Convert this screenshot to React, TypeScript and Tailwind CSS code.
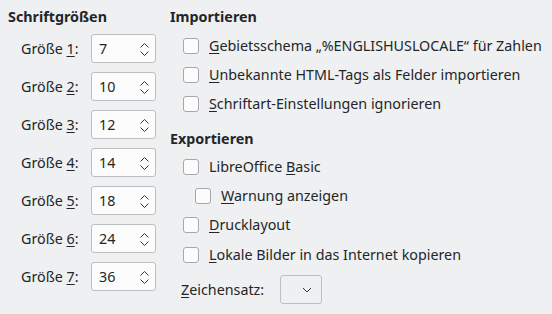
import React from "react";

const sizes = ["7", "10", "12", "14", "18", "24", "36"];

function Spin({ value }: { value: string }) {
  return (
    <div className="relative flex h-[29px] w-[65px] items-center rounded-[3px] border border-[#bcbebf] bg-[#fcfcfc] pl-[7px]">
      <span>{value}</span>
      <svg className="absolute right-[5px] top-[6px]" width="11" height="17" viewBox="0 0 11 17" fill="none" stroke="#31363b" strokeWidth="1">
        <path d="M1.5 6.5 L5.5 2.5 L9.5 6.5" />
        <path d="M1.5 10.5 L5.5 14.5 L9.5 10.5" />
      </svg>
    </div>
  );
}

function Check({ children, indent = false, tall = false }: { children: React.ReactNode; indent?: boolean; tall?: boolean }) {
  return (
    <div className={`flex items-center ${tall ? "h-[30px]" : "h-[29px]"} ${indent ? "pl-[25px]" : "pl-[13px]"}`}>
      <div className="h-[16px] w-[16px] rounded-[3px] border border-[#a6a8ab] bg-[#fcfcfc]" />
      <span className="ml-[10px]">{children}</span>
    </div>
  );
}

export default function App() {
  return (
    <div
      className="flex h-[314px] w-[552px] bg-[#eff0f1] text-[14.3px] text-[#232629]"
      style={{ fontFamily: '"Noto Sans", sans-serif' }}
    >
      <div className="w-[170px] pl-[8px] pt-[8px]">
        <div className="font-bold leading-[18px]">Schriftgrößen</div>
        <div className="mt-[8px] flex flex-col gap-[9px] pl-[13px]">
          {sizes.map((s, i) => (
            <div key={s} className="flex items-center">
              <span className="w-[70px]">
                Größe <span className="underline underline-offset-2">{i + 1}</span>:
              </span>
              <Spin value={s} />
            </div>
          ))}
        </div>
      </div>
      <div className="flex-1 pt-[8px]">
        <div className="font-bold leading-[18px]">Importieren</div>
        <div className="mt-[5px]">
          <Check>
            <span className="underline underline-offset-2">G</span>ebietsschema „%ENGLISHUSLOCALE“ für Zahlen
          </Check>
          <Check>
            <span className="underline underline-offset-2">U</span>nbekannte HTML-Tags als Felder importieren
          </Check>
          <Check>
            <span className="underline underline-offset-2">S</span>chriftart-Einstellungen ignorieren
          </Check>
        </div>
        <div className="mt-[12px] font-bold leading-[18px]">Exportieren</div>
        <div className="mt-[4px]">
          <Check>
            LibreOffice <span className="underline underline-offset-2">B</span>asic
          </Check>
          <Check indent>
            <span className="underline underline-offset-2">W</span>arnung anzeigen
          </Check>
          <Check tall>
            <span className="underline underline-offset-2">D</span>rucklayout
          </Check>
          <Check tall>
            <span className="underline underline-offset-2">L</span>okale Bilder in das Internet kopieren
          </Check>
        </div>
        <div className="mt-[5px] flex items-center pl-[11px]">
          <span>
            <span className="underline underline-offset-2">Z</span>eichensatz:
          </span>
          <div className="relative ml-[16px] h-[29px] w-[42px] rounded-[3px] border border-[#bcbebf] bg-[#eff0f1]">
            <svg className="absolute right-[9px] top-[11px]" width="10" height="6" viewBox="0 0 10 6" fill="none" stroke="#31363b" strokeWidth="1">
              <path d="M1 1 L5 5 L9 1" />
            </svg>
          </div>
        </div>
      </div>
    </div>
  );
}
